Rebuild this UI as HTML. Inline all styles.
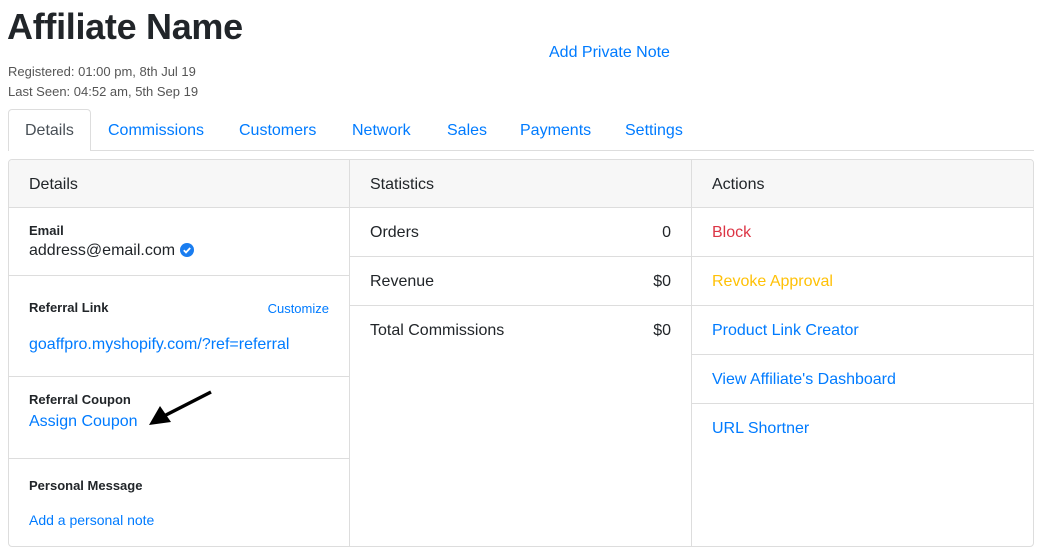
<!DOCTYPE html>
<html><head><meta charset="utf-8"><style>
*{box-sizing:border-box;margin:0;padding:0}
body{width:1045px;height:556px;background:#fff;font-family:"Liberation Sans",sans-serif;color:#212529;position:relative;overflow:hidden}
.a{position:absolute}
.blue{color:#007bff}
h1{position:absolute;left:7px;top:6px;font-size:36px;font-weight:bold;color:#212529;letter-spacing:-0.3px}
.small{font-size:13px;color:#555}
.tab{position:absolute;top:122px;font-size:16px;color:#007bff}
.card{position:absolute;left:8px;top:159px;width:1026px;height:388px;border:1px solid #ddd;border-radius:4px;overflow:hidden}
.col{position:absolute;top:0;bottom:0;border-right:1px solid #ddd}
.hd{height:48px;background:#f7f7f7;border-bottom:1px solid #ddd;padding:16px 20px;font-size:16px}
.row{height:49px;border-bottom:1px solid #ddd;padding:16px 20px 0;font-size:16px;display:flex;justify-content:space-between}
.lbl{font-size:13px;font-weight:bold}
.sec{border-bottom:1px solid #ddd;padding-left:20px;position:relative}
</style></head><body>
<h1>Affiliate Name</h1>
<div class="a small" style="left:8px;top:64px">Registered: 01:00 pm, 8th Jul 19</div>
<div class="a small" style="left:8px;top:84px">Last Seen: 04:52 am, 5th Sep 19</div>
<div class="a blue" style="left:549px;top:44px;font-size:16px">Add Private Note</div>
<div class="a" style="left:8px;top:150px;width:1026px;border-top:1px solid #ddd"></div>
<div class="a" style="left:8px;top:109px;width:83px;height:42px;border:1px solid #ddd;border-bottom:none;border-radius:4px 4px 0 0;background:#fff"></div>
<div class="tab" style="left:25px;color:#495057">Details</div>
<div class="tab" style="left:108px">Commissions</div>
<div class="tab" style="left:239px">Customers</div>
<div class="tab" style="left:352px">Network</div>
<div class="tab" style="left:447px">Sales</div>
<div class="tab" style="left:520px">Payments</div>
<div class="tab" style="left:625px">Settings</div>
<div class="card">
 <div class="col" style="left:0;width:341px">
  <div class="hd">Details</div>
  <div class="sec" style="height:68px;padding-top:15px"><div class="lbl">Email</div><div style="font-size:16px;margin-top:4px">address@email.com <svg width="14" height="14" viewBox="0 0 14 14" style="vertical-align:-2px"><circle cx="7" cy="7" r="7" fill="#1a7df0"/><path d="M3.8 7.2l2.2 2.2 4.2-4.4" stroke="#fff" stroke-width="1.8" fill="none"/></svg></div></div>
  <div class="sec" style="height:101px;padding-top:24px"><div class="lbl">Referral Link</div><div class="a blue" style="right:20px;top:25px;font-size:13px">Customize</div><div class="blue" style="font-size:16px;margin-top:21px">goaffpro.myshopify.com/?ref=referral</div></div>
  <div class="sec" style="height:82px;padding-top:15px"><div class="lbl">Referral Coupon</div><div class="blue" style="font-size:16px;margin-top:6px">Assign Coupon</div>
   <svg class="a" style="left:135px;top:12px" width="70" height="40" viewBox="0 0 70 40"><path d="M67 3L20 27" stroke="#000" stroke-width="3.5"/><path d="M5 36L16 17L27 33Z" fill="#000"/></svg></div>
  <div class="sec" style="border:none;padding-top:19px"><div class="lbl">Personal Message</div><div class="blue" style="font-size:14px;margin-top:19px">Add a personal note</div></div>
 </div>
 <div class="col" style="left:341px;width:342px">
  <div class="hd">Statistics</div>
  <div class="row"><span>Orders</span><span>0</span></div>
  <div class="row"><span>Revenue</span><span>$0</span></div>
  <div class="row" style="border:none"><span>Total Commissions</span><span>$0</span></div>
 </div>
 <div class="col" style="left:683px;right:0;border:none">
  <div class="hd">Actions</div>
  <div class="row" style="color:#dc3545">Block</div>
  <div class="row" style="color:#ffc107">Revoke Approval</div>
  <div class="row blue">Product Link Creator</div>
  <div class="row blue">View Affiliate's Dashboard</div>
  <div class="row blue" style="border:none">URL Shortner</div>
 </div>
</div>
</body></html>
